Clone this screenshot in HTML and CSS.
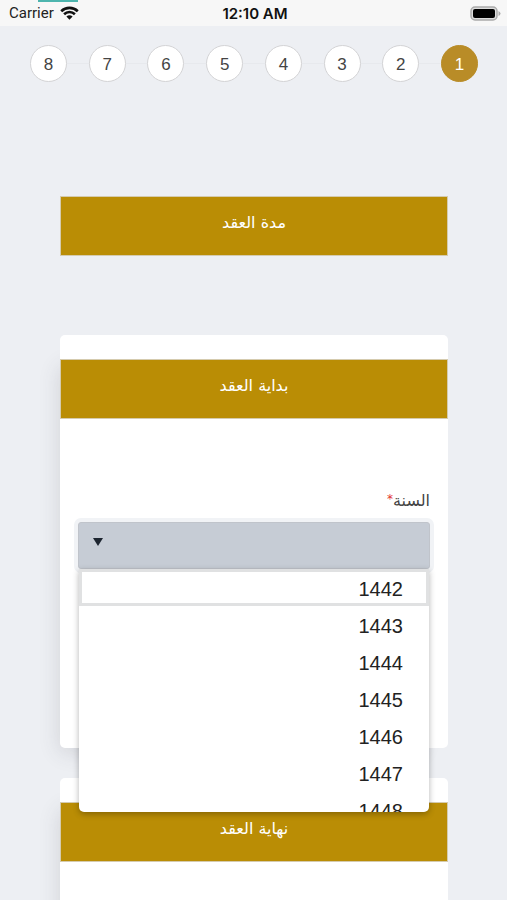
FILE: index.html
```html
<!DOCTYPE html>
<html lang="ar" dir="rtl">
<head>
<meta charset="utf-8">
<meta name="viewport" content="width=device-width, initial-scale=1">
<title>مدة العقد</title>
<link rel="stylesheet" href="styles.css">
</head>
<body>
<header class="status" dir="ltr">
  <div class="carrier">
    <span>Carrier</span>
    <svg class="wifi" viewBox="0 0 19 14" aria-hidden="true">
      <path d="M1.2 5.2a12 12 0 0 1 16.6 0M4.1 8.2a7.8 7.8 0 0 1 10.8 0" fill="none" stroke="#111" stroke-width="2.6"/>
      <path d="M6.4 10.6a4.6 4.6 0 0 1 6.2 0L9.5 13.8z" fill="#111"/>
    </svg>
  </div>
  <span class="time">12:10 AM</span>
  <svg class="battery" viewBox="0 0 31 15" aria-hidden="true">
    <rect x="1" y="1" width="26" height="13" rx="4" fill="#ddd" stroke="#aaa" stroke-width="1.5"/>
    <rect x="3" y="3" width="22" height="9" rx="2" fill="#000"/>
    <path d="M28.500 5v5q2-1 2-2.500t-2-2.500z" fill="#aaa"/>
  </svg>
</header>
<main>
  <nav>
    <ol class="steps">
      <li><button class="step current" type="button" aria-current="step">1</button></li>
      <li><button class="step" type="button">2</button></li>
      <li><button class="step" type="button">3</button></li>
      <li><button class="step" type="button">4</button></li>
      <li><button class="step" type="button">5</button></li>
      <li><button class="step" type="button">6</button></li>
      <li><button class="step" type="button">7</button></li>
      <li><button class="step" type="button">8</button></li>
    </ol>
  </nav>
  <div class="content">
    <h1 class="heading">مدة العقد</h1>
    <section class="card">
      <h2 class="heading">بداية العقد</h2>
      <div class="field">
        <label for="year">السنة<span class="required">*</span></label>
        <div class="picker">
          <select id="year" class="select"><option value=""></option></select>
          <svg class="arrow" viewBox="0 0 10 8" aria-hidden="true"><path d="M0 0h10L5 8z" fill="#1d2530"/></svg>
          <ul class="options">
            <li class="active">1442</li>
            <li>1443</li>
            <li>1444</li>
            <li>1445</li>
            <li>1446</li>
            <li>1447</li>
            <li>1448</li>
          </ul>
        </div>
      </div>
    </section>
    <section class="card">
      <h2 class="heading">نهاية العقد</h2>
    </section>
  </div>
</main>
</body>
</html>
```
FILE: styles.css
```css
* { box-sizing: border-box; }

body {
  margin: 0;
  height: 100vh;
  overflow: hidden;
  background: #edeff3;
  color: #444;
  font-family: "Liberation Sans", "DejaVu Sans", sans-serif;
}

.status {
  display: grid;
  grid-template-columns: 1fr auto 1fr;
  align-items: center;
  height: 26px;
  padding: 0 6px 0 9px;
  background:
    linear-gradient(#4db5ae, #4db5ae) 38px 0 / 40px 2px no-repeat,
    #f7f7f7;
  box-shadow: 0 12px 16px -14px rgba(60, 65, 75, 0.35);
  color: #222;
}

.carrier {
  display: flex;
  align-items: center;
  gap: 6px;
  font-family: Roboto, sans-serif;
  font-size: 15px;
}

.wifi { width: 19px; height: 14px; }

.time {
  color: #111;
  font-family: Inter, "Liberation Sans", sans-serif;
  font-size: 15px;
  font-weight: 600;
}

.battery { width: 31px; height: 15px; justify-self: end; }

.steps {
  display: flex;
  justify-content: space-between;
  margin: 0;
  padding: 19px 29px 0 30px;
  list-style: none;
  background: linear-gradient(#e7e9ed, #e7e9ed) center 37px / 84% 1px no-repeat;
}

.step {
  display: block;
  width: 37px;
  height: 37px;
  padding: 2px 0 0;
  border: 1px solid #d3d3d5;
  border-radius: 50%;
  background: #fff;
  color: #444;
  font-family: inherit;
  font-size: 17px;
}

.step.current {
  border-color: #b98c27;
  background: #b98c27;
  color: #fff;
}

.content {
  padding: 114px 59px 0 60px;
}

.heading {
  height: 60px;
  margin: 0;
  padding-top: 14px;
  border: 1px solid #d5cbae;
  background: #ba8d05;
  color: #fff;
  font-family: "DejaVu Sans", sans-serif;
  font-size: 16px;
  font-weight: 400;
  line-height: 24px;
  text-align: center;
}

.card {
  min-height: 413px;
  margin-bottom: 30px;
  padding-top: 24px;
  border-radius: 5px;
  background: #fff;
  box-shadow: -14px 18px 20px -14px rgba(60, 65, 75, 0.16);
}

.heading + .card { margin-top: 79px; }

.field { padding: 70px 18px 0; }

.field label {
  display: block;
  height: 33px;
  font-family: "DejaVu Sans", sans-serif;
  font-size: 16px;
  line-height: 24px;
}

.required { color: #e3342f; font-size: 12px; vertical-align: 3px; line-height: 12px; }

.picker { position: relative; }

.select {
  display: block;
  width: 100%;
  height: 47px;
  border: 1px solid #c0c4cb;
  border-radius: 3px;
  appearance: none;
  background: #c6ccd5;
  box-shadow: 0 0 0 4px #f1f3f6;
  font-size: 16px;
}

.arrow {
  position: absolute;
  top: 16px;
  left: 15px;
  width: 10px;
  height: 8px;
}

.options {
  position: absolute;
  z-index: 2;
  top: 47px;
  left: 1px;
  right: 1px;
  height: 243px;
  margin: 0;
  overflow: hidden;
  list-style: none;
  padding: 0;
  border-radius: 0 0 5px 5px;
  background: #fff;
  box-shadow: 0 2px 6px rgba(0, 0, 0, 0.3);
}

.options li {
  height: 37px;
  padding: 0 23px;
  border: 3px solid transparent;
  color: #222;
  font-size: 20px;
  line-height: 34px;
}

.options .active { border-color: #e0e1e2; }
```
